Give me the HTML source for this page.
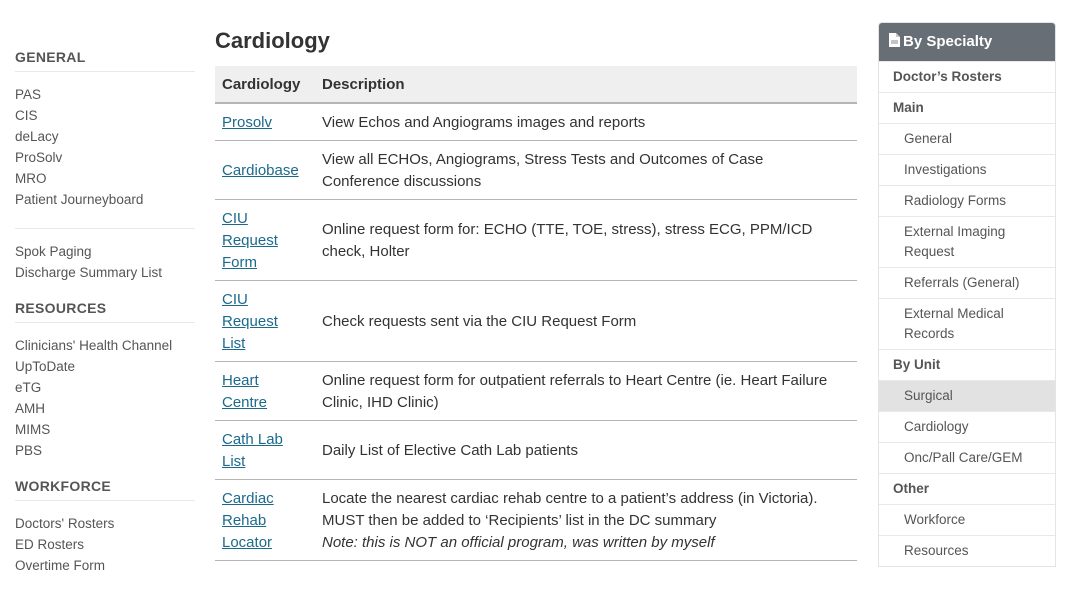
<!DOCTYPE html>
<html><head><meta charset="utf-8"><style>
*{margin:0;padding:0;box-sizing:border-box}
body{width:1073px;height:591px;background:#fff;font-family:"Liberation Sans",sans-serif;color:#333;position:relative;overflow:hidden}
.l{position:absolute;left:15px;width:180px;font-size:13.5px;color:#555}
.l h4{font-size:14px;font-weight:bold;color:#555;letter-spacing:.3px;height:26px;line-height:22px;border-bottom:1px solid #e8e8e8;margin-bottom:12px}
.l div{line-height:21px}
h1{position:absolute;left:215px;top:28px;font-size:22px;font-weight:bold;color:#333}
table{position:absolute;left:215px;top:66px;width:642px;border-collapse:collapse;font-size:15px;table-layout:fixed}
th{background:#efefef;text-align:left;height:37px;padding:1px 7px 0;border-bottom:2px solid #b5b5b5;font-weight:bold}
td{padding:8px 7px 6px;line-height:22px;border-bottom:1px solid #b5b5b5;vertical-align:middle}
td a{color:#1b6a8c;text-decoration:underline}
.r{position:absolute;left:878px;top:22px;width:178px;border:1px solid #e4e4e4;border-radius:4px 4px 0 0;font-size:13.5px;color:#555;overflow:hidden}
.r .h{background:#676e75;color:#fff;font-weight:bold;font-size:15px;height:38px;line-height:38px;padding-left:10px}
.r div.i{border-top:1px solid #e8e8e8;padding:5px 14px 5px 25px;line-height:20px}
.r div.b{font-weight:bold;padding-left:14px}
.r div.s{background:#e2e2e2}
</style></head><body>
<div class="l" style="top:46px">
<h4>GENERAL</h4>
<div>PAS</div><div>CIS</div><div>deLacy</div><div>ProSolv</div><div>MRO</div><div>Patient Journeyboard</div>
<div style="border-top:1px solid #e8e8e8;margin-top:18px;padding-top:12px">Spok Paging</div><div>Discharge Summary List</div>
</div>
<div class="l" style="top:297px"><h4>RESOURCES</h4>
<div>Clinicians' Health Channel</div><div>UpToDate</div><div>eTG</div><div>AMH</div><div>MIMS</div><div>PBS</div></div>
<div class="l" style="top:475px"><h4>WORKFORCE</h4>
<div>Doctors' Rosters</div><div>ED Rosters</div><div>Overtime Form</div></div>
<h1>Cardiology</h1>
<table>
<colgroup><col style="width:100px"><col></colgroup>
<tr><th>Cardiology</th><th>Description</th></tr>
<tr style="height:37px"><td><a>Prosolv</a></td><td>View Echos and Angiograms images and reports</td></tr>
<tr><td><a>Cardiobase</a></td><td>View all ECHOs, Angiograms, Stress Tests and Outcomes of Case<br>Conference discussions</td></tr>
<tr><td><a>CIU<br>Request<br>Form</a></td><td>Online request form for: ECHO (TTE, TOE, stress), stress ECG, PPM/ICD<br>check, Holter</td></tr>
<tr><td><a>CIU<br>Request<br>List</a></td><td>Check requests sent via the CIU Request Form</td></tr>
<tr><td><a>Heart<br>Centre</a></td><td>Online request form for outpatient referrals to Heart Centre (ie. Heart Failure<br>Clinic, IHD Clinic)</td></tr>
<tr><td><a>Cath Lab<br>List</a></td><td>Daily List of Elective Cath Lab patients</td></tr>
<tr><td><a>Cardiac<br>Rehab<br>Locator</a></td><td>Locate the nearest cardiac rehab centre to a patient’s address (in Victoria).<br>MUST then be added to ‘Recipients’ list in the DC summary<br><i>Note: this is NOT an official program, was written by myself</i></td></tr>
</table>
<div class="r">
<div class="h"><svg width="11" height="14" viewBox="0 0 11 14" style="vertical-align:-1px;margin-right:3px"><path d="M0 0H7L11 4V14H0Z" fill="#fff"/><path d="M7 0V4H11" fill="#ccc"/><path d="M2 8H9M2 10H9" stroke="#888" stroke-width="1"/></svg>By Specialty</div>
<div class="i b">Doctor’s Rosters</div>
<div class="i b">Main</div>
<div class="i">General</div>
<div class="i">Investigations</div>
<div class="i">Radiology Forms</div>
<div class="i">External Imaging Request</div>
<div class="i">Referrals (General)</div>
<div class="i">External Medical Records</div>
<div class="i b">By Unit</div>
<div class="i s">Surgical</div>
<div class="i">Cardiology</div>
<div class="i">Onc/Pall Care/GEM</div>
<div class="i b">Other</div>
<div class="i">Workforce</div>
<div class="i">Resources</div>
</div>
</body></html>
